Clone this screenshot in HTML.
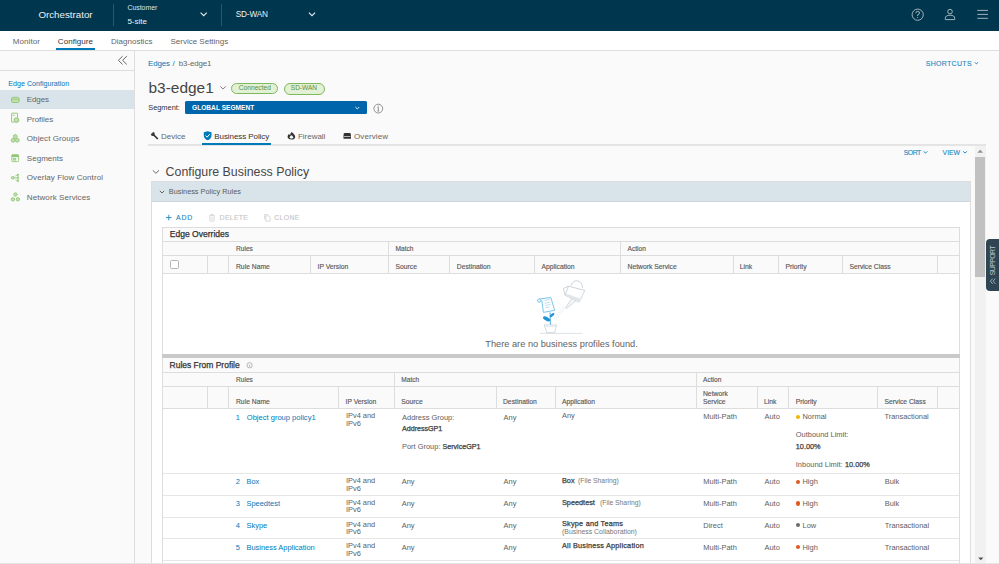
<!DOCTYPE html>
<html><head><meta charset="utf-8"><style>
html,body{margin:0;padding:0;}
body{width:999px;height:564px;overflow:hidden;position:relative;background:#fafafa;font-family:"Liberation Sans",sans-serif;}
.t{position:absolute;white-space:pre;}
.a{position:absolute;}
svg{position:absolute;overflow:visible;}
</style></head><body>
<div class='a' style='left:0;top:0;width:999px;height:31px;background:#00364e;'></div>
<div class='a' style='left:113px;top:4px;width:1px;height:22px;background:rgba(255,255,255,0.16);'></div>
<div class='a' style='left:221px;top:4px;width:1px;height:22px;background:rgba(255,255,255,0.16);'></div>
<svg style='left:0;top:0' width='999' height='31'><polyline points='200.6,12.6 203.7,15.7 206.8,12.6' fill='none' stroke='#e6ecef' stroke-width='1.1'/><polyline points='308.9,12.6 312,15.7 315.1,12.6' fill='none' stroke='#e6ecef' stroke-width='1.1'/><circle cx='917.7' cy='14.7' r='5.6' fill='none' stroke='#b4c2ca' stroke-width='0.9'/><path d='M915.9,13.2 Q915.9,11.3 917.7,11.3 Q919.5,11.3 919.5,13 Q919.5,14.2 917.7,14.8 L917.7,16' fill='none' stroke='#b4c2ca' stroke-width='0.9'/><circle cx='917.7' cy='17.6' r='0.5' fill='#b4c2ca'/><circle cx='950' cy='11.6' r='2.3' fill='none' stroke='#b4c2ca' stroke-width='0.9'/><path d='M945.3,19.6 L945.3,18.4 Q945.3,15.2 950,15.2 Q954.7,15.2 954.7,18.4 L954.7,19.6 Z' fill='none' stroke='#b4c2ca' stroke-width='0.9'/><path d='M977.3,10.4 H987.9 M977.3,14.4 H987.9 M977.3,18.3 H987.9' stroke='#b4c2ca' stroke-width='0.9'/></svg>
<div class='a' style='left:0;top:31px;width:999px;height:19px;background:#ffffff;border-bottom:1px solid #dddddd;'></div>
<div class='a' style='left:56px;top:48px;width:39px;height:2px;background:#0079b8;'></div>
<div class='a' style='left:134px;top:51px;width:1px;height:513px;background:#dddddd;'></div>
<div class='a' style='left:0;top:70px;width:134px;height:1px;background:#dddddd;'></div>
<svg style='left:0;top:0' width='140' height='80'><polyline points='122.6,56.2 118.4,60.3 122.6,64.4' fill='none' stroke='#666' stroke-width='1'/><polyline points='126.8,56.2 122.6,60.3 126.8,64.4' fill='none' stroke='#666' stroke-width='1'/></svg>
<div class='a' style='left:0;top:90px;width:134px;height:19px;background:#d9e4ea;'></div>
<svg style='left:0;top:0' width='30' height='210'><rect x='11.5' y='97.3' width='7.6' height='5.2' rx='1.6' fill='#c2e0ae' stroke='#93c777' stroke-width='1'/><path d='M12,99.3 H18.6' stroke='#93c777' stroke-width='0.8'/><path d='M17.6,117.5 V113.6 Q17.6,113.2 17.2,113.2 H12 Q11.6,113.2 11.6,113.6 V121.8 Q11.6,122.2 12,122.2 H14' fill='none' stroke='#93c777' stroke-width='1'/><path d='M12.5,115.3 H15' stroke='#93c777' stroke-width='0.8'/><circle cx='16.4' cy='120.1' r='2.4' fill='#c2e0ae' stroke='#93c777' stroke-width='1'/><circle cx='15.2' cy='136.5' r='1.9' fill='#c2e0ae' stroke='#93c777' stroke-width='0.9'/><circle cx='13.1' cy='140.3' r='1.9' fill='#c2e0ae' stroke='#93c777' stroke-width='0.9'/><circle cx='17.3' cy='140.3' r='1.9' fill='#c2e0ae' stroke='#93c777' stroke-width='0.9'/><rect x='11.8' y='154.7' width='6.8' height='6.9' rx='0.8' fill='none' stroke='#93c777' stroke-width='0.9'/><rect x='11.8' y='154.7' width='6.8' height='2.4' fill='#93c777'/><rect x='13.2' y='158.3' width='2.6' height='1.8' fill='#c2e0ae' stroke='#93c777' stroke-width='0.7'/><ellipse cx='12.9' cy='177.8' rx='1.5' ry='1.3' fill='#c2e0ae' stroke='#93c777' stroke-width='0.9'/><path d='M14.4,177.8 H18 M18,174.6 V181 M15.5,175.8 L18,174.6 M15.5,179.8 L18,181' fill='none' stroke='#93c777' stroke-width='0.9'/><circle cx='18' cy='174.6' r='0.9' fill='#93c777'/><circle cx='18' cy='177.8' r='0.9' fill='#93c777'/><circle cx='18' cy='181' r='0.9' fill='#93c777'/><circle cx='15.4' cy='194.5' r='1.7' fill='#c2e0ae' stroke='#93c777' stroke-width='0.9'/><circle cx='12.9' cy='199.3' r='1.7' fill='#c2e0ae' stroke='#93c777' stroke-width='0.9'/><circle cx='17.9' cy='199.3' r='1.7' fill='#c2e0ae' stroke='#93c777' stroke-width='0.9'/></svg>
<svg style='left:0;top:0' width='999' height='120'><polyline points='974.8,62.3 976.4,63.9 978,62.3' fill='none' stroke='#0079b8' stroke-width='0.9'/><polyline points='220.3,86.3 223,89.1 225.8,86.3' fill='none' stroke='#777' stroke-width='0.9'/></svg>
<div class='a' style='left:231px;top:82.8px;width:45.2px;height:9.7px;border:1px solid #80b85e;border-radius:6px;background:#e2f1d5;'></div>
<div class='a' style='left:283.7px;top:83px;width:39px;height:9.5px;border:1px solid #80b85e;border-radius:6px;background:#e2f1d5;'></div>
<div class='a' style='left:185px;top:101.4px;width:182px;height:12.7px;background:#0065aa;border-radius:1.5px;'></div>
<svg style='left:0;top:0' width='999' height='150'><polyline points='355.4,107 357.3,108.9 359.2,107' fill='none' stroke='#ffffff' stroke-width='0.9'/><circle cx='378.3' cy='108.6' r='4.4' fill='none' stroke='#777' stroke-width='0.8'/><path d='M378.3,107.3 V111 M377.4,111 H379.2 M377.5,107.3 H378.3' stroke='#777' stroke-width='0.8' fill='none'/><circle cx='378.3' cy='106' r='0.5' fill='#777'/><path d='M153.6,134.9 L157.5,138.6' stroke='#333' stroke-width='1.45' stroke-linecap='round'/><circle cx='152.8' cy='134' r='1.95' fill='#333'/><circle cx='151.6' cy='132.6' r='1.05' fill='#fafafa'/><path d='M151,133.2 L150.4,132 L152.2,132' fill='#fafafa'/><path d='M203.8,132.3 L207.65,131.2 L211.5,132.3 L211.5,135.3 Q211.5,138.8 207.65,140.3 Q203.8,138.8 203.8,135.3 Z' fill='#0079b8'/><polyline points='205.6,135.6 207.2,137.1 209.8,134.2' fill='none' stroke='#fff' stroke-width='1'/><path d='M291.6,132 C293.2,133.4 295.2,135 295.2,137 C295.2,138.7 293.6,139.6 291.4,139.6 C289.2,139.6 287.6,138.6 287.6,136.8 C287.6,135.4 288.3,134.5 289.1,133.7 C289.3,134.6 289.7,135.1 290.2,135.4 C290.2,134.2 290.7,133 291.6,132 Z' fill='#333'/><path d='M291.5,135.2 C292.6,136 293.3,136.8 293.3,137.6 C293.3,138.3 292.5,138.6 291.4,138.6 C290.3,138.6 289.6,138.2 289.6,137.5 C289.6,136.6 290.5,135.9 291.5,135.2 Z' fill='#fafafa'/><path d='M344.6,133 H349.9 Q350.4,133 350.6,133.5 L351,135.4 V138.2 Q351,138.8 350.4,138.8 H344.1 Q343.5,138.8 343.5,138.2 V135.4 L343.9,133.5 Q344.1,133 344.6,133 Z' fill='#333'/><rect x='344' y='136' width='6.5' height='0.65' fill='#fafafa'/></svg>
<div class='a' style='left:148px;top:144px;width:838px;height:2px;background:#e4e4e4;'></div>
<div class='a' style='left:202px;top:143px;width:69px;height:2px;background:#0079b8;'></div>
<svg style='left:0;top:0' width='999' height='170'><polyline points='923.7,151.3 925.5,153.1 927.3,151.3' fill='none' stroke='#0079b8' stroke-width='0.9'/><polyline points='963.2,151.3 965,153.1 966.8,151.3' fill='none' stroke='#0079b8' stroke-width='0.9'/></svg>
<div class='a' style='left:975px;top:146px;width:11px;height:418px;background:#f1f1f1;'></div>
<div class='a' style='left:975px;top:157px;width:10px;height:119.6px;background:#c1c1c1;'></div>
<svg style='left:0;top:0' width='999' height='564'><polygon points='977.4,152.8 980.2,149.8 983,152.8' fill='#8f8f8f'/><polygon points='978.2,557.5 980.8,560.3 983.4,557.5' fill='#505050'/></svg>
<div class='a' style='left:986px;top:239.3px;width:20px;height:51.6px;background:#2f4553;border-radius:4px;'></div>
<svg style='left:0;top:0' width='999' height='300'><text x='0' y='0' transform='translate(994.7,275.2) rotate(-90)' font-family='Liberation Sans' font-size='6.9' fill='#b9c6ce' textLength='29.8' lengthAdjust='spacing'>SUPPORT</text><polyline points='992.6,278.6 990.4,281.2 992.6,283.8' fill='none' stroke='#b9c6ce' stroke-width='0.8'/><polyline points='995.3,278.6 993.1,281.2 995.3,283.8' fill='none' stroke='#b9c6ce' stroke-width='0.8'/></svg>
<div class='a' style='left:151px;top:181px;width:818px;height:400px;background:#fff;border:1px solid #dddddd;'></div>
<div class='a' style='left:152px;top:182px;width:818px;height:19px;background:#d9e4ea;border-bottom:1px solid #cfd7dc;'></div>
<svg style='left:0;top:0' width='400' height='230'><polyline points='152.8,170.3 155.9,173.3 159,170.3' fill='none' stroke='#555' stroke-width='0.9'/><polyline points='159.8,190.8 162,193 164.2,190.8' fill='none' stroke='#555' stroke-width='0.9'/></svg>
<svg style='left:0;top:0' width='400' height='230'><path d='M166,217.6 H171.6 M168.8,214.8 V220.4' stroke='#1f86bd' stroke-width='0.9'/><path d='M209.2,215.3 H214.8 M211,215.3 V214.5 H213 V215.3' fill='none' stroke='#cccccc' stroke-width='0.75'/><path d='M209.9,215.8 V220.6 Q209.9,221.1 210.4,221.1 H213.6 Q214.1,221.1 214.1,220.6 V215.8' fill='none' stroke='#cccccc' stroke-width='0.75'/><path d='M211.3,216.8 V220 M212.7,216.8 V220' stroke='#d4d4d4' stroke-width='0.55'/><path d='M264.6,219.4 V214.5 H267.8' fill='none' stroke='#cccccc' stroke-width='0.75'/><path d='M265.9,215.8 H268.8 L270.1,217.1 V221.1 H265.9 Z' fill='#fff' stroke='#cccccc' stroke-width='0.75'/></svg>
<div class='a' style='left:162px;top:227px;width:797px;height:46px;background:#fafafa;'></div>
<div class='a' style='left:162px;top:227px;width:798px;height:1px;background:#dddddd;'></div>
<div class='a' style='left:162px;top:241px;width:798px;height:1px;background:#dddddd;'></div>
<div class='a' style='left:162px;top:255px;width:798px;height:1px;background:#dddddd;'></div>
<div class='a' style='left:162px;top:273px;width:798px;height:1px;background:#dddddd;'></div>
<div class='a' style='left:162px;top:227px;width:1px;height:127px;background:#dddddd;'></div>
<div class='a' style='left:959px;top:227px;width:1px;height:127px;background:#dddddd;'></div>
<div class='a' style='left:388px;top:241px;width:1px;height:32px;background:#dddddd;'></div>
<div class='a' style='left:620px;top:241px;width:1px;height:32px;background:#dddddd;'></div>
<div class='a' style='left:207px;top:255px;width:1px;height:18px;background:#dddddd;'></div>
<div class='a' style='left:228px;top:255px;width:1px;height:18px;background:#dddddd;'></div>
<div class='a' style='left:310px;top:255px;width:1px;height:18px;background:#dddddd;'></div>
<div class='a' style='left:449px;top:255px;width:1px;height:18px;background:#dddddd;'></div>
<div class='a' style='left:534px;top:255px;width:1px;height:18px;background:#dddddd;'></div>
<div class='a' style='left:733px;top:255px;width:1px;height:18px;background:#dddddd;'></div>
<div class='a' style='left:778px;top:255px;width:1px;height:18px;background:#dddddd;'></div>
<div class='a' style='left:842px;top:255px;width:1px;height:18px;background:#dddddd;'></div>
<div class='a' style='left:937px;top:255px;width:1px;height:18px;background:#dddddd;'></div>
<div class='a' style='left:169.6px;top:259.5px;width:7.2px;height:7.2px;border:0.8px solid #b5b5b5;border-radius:1.5px;background:#fff;'></div>
<svg style='left:0;top:0' width='999' height='564'><path d='M540.2,333.4 H582' stroke='#dbe3e8' stroke-width='1'/><path d='M544.1,324.9 H556.6 L554.7,332.6 H546.9 Z' fill='#fff' stroke='#b8c3cb' stroke-width='0.6'/><path d='M544.5,326.3 H556.2' stroke='#c8d1d7' stroke-width='0.5'/><path d='M550.1,312.4 L550.4,324.6' stroke='#2b9bd8' stroke-width='0.8'/><ellipse cx='546.6' cy='318.9' rx='3.9' ry='1.9' transform='rotate(28 546.6 318.9)' fill='#1f95d6'/><ellipse cx='552.1' cy='315.1' rx='2.9' ry='1.3' transform='rotate(-40 552.1 315.1)' fill='#1f95d6'/><path d='M539.5,299 L550.8,297.5 L554.7,310.3 L543.4,312.4 L541.8,300.6' fill='#fff' stroke='#4fb1e4' stroke-width='0.75'/><circle cx='539.2' cy='300.6' r='1.7' fill='#eaf5fb' stroke='#4fb1e4' stroke-width='0.7'/><path d='M544.5,300.6 L550,299.4 M544.5,303.3 L550.4,302.1 M544.9,305.6 L550.8,304.4 M545.3,307.9 L549.6,306.8' stroke='#86c8ec' stroke-width='0.55'/><path d='M554.3,318.9 L563.8,306.2' stroke='#c9d1d6' stroke-width='0.6' stroke-dasharray='1.3,1.1'/><path d='M556.3,319.3 L565.6,307' stroke='#c9d1d6' stroke-width='0.6' stroke-dasharray='1.3,1.1'/><path d='M572.1,298 L565.7,307.6 L566.6,308.6 L576.2,300.6 Z' fill='#f3f5f7' stroke='#b8c3cb' stroke-width='0.6'/><path d='M571.1,285.6 Q572.5,280.3 577.4,280.8 Q582.4,281.6 582.6,287.8' fill='none' stroke='#b8c3cb' stroke-width='0.7'/><path d='M568.5,286.2 L584.8,290.4 L579.1,302.2 L565,295.2 Z' fill='#fff' stroke='#b8c3cb' stroke-width='0.7'/><path d='M565.9,293.4 L581.6,298.9 L579.1,302.2 L565,295.2 Z' fill='#e1e6ea'/><path d='M568.5,286.2 L563.4,288.5 L565,295.2' fill='none' stroke='#b8c3cb' stroke-width='0.7'/></svg>
<div class='a' style='left:162px;top:354px;width:798px;height:4px;background:#c9c9c9;'></div>
<div class='a' style='left:162px;top:358px;width:797px;height:50px;background:#fafafa;'></div>
<div class='a' style='left:162px;top:372px;width:798px;height:1px;background:#dddddd;'></div>
<div class='a' style='left:162px;top:386px;width:798px;height:1px;background:#dddddd;'></div>
<div class='a' style='left:162px;top:408px;width:798px;height:1px;background:#dddddd;'></div>
<div class='a' style='left:163px;top:473px;width:796px;height:1px;background:#e6e6e6;'></div>
<div class='a' style='left:163px;top:495px;width:796px;height:1px;background:#e6e6e6;'></div>
<div class='a' style='left:163px;top:517px;width:796px;height:1px;background:#e6e6e6;'></div>
<div class='a' style='left:163px;top:538px;width:796px;height:1px;background:#e6e6e6;'></div>
<div class='a' style='left:163px;top:560px;width:796px;height:1px;background:#e6e6e6;'></div>
<div class='a' style='left:162px;top:358px;width:1px;height:206px;background:#dddddd;'></div>
<div class='a' style='left:959px;top:358px;width:1px;height:206px;background:#dddddd;'></div>
<div class='a' style='left:394px;top:372px;width:1px;height:36px;background:#dddddd;'></div>
<div class='a' style='left:696px;top:372px;width:1px;height:36px;background:#dddddd;'></div>
<div class='a' style='left:207px;top:386px;width:1px;height:22px;background:#dddddd;'></div>
<div class='a' style='left:228px;top:386px;width:1px;height:22px;background:#dddddd;'></div>
<div class='a' style='left:338px;top:386px;width:1px;height:22px;background:#dddddd;'></div>
<div class='a' style='left:496px;top:386px;width:1px;height:22px;background:#dddddd;'></div>
<div class='a' style='left:555px;top:386px;width:1px;height:22px;background:#dddddd;'></div>
<div class='a' style='left:757px;top:386px;width:1px;height:22px;background:#dddddd;'></div>
<div class='a' style='left:788px;top:386px;width:1px;height:22px;background:#dddddd;'></div>
<div class='a' style='left:877px;top:386px;width:1px;height:22px;background:#dddddd;'></div>
<div class='a' style='left:937px;top:386px;width:1px;height:22px;background:#dddddd;'></div>
<svg style='left:0;top:0' width='300' height='380'><circle cx='249.6' cy='365.3' r='2.6' fill='none' stroke='#888' stroke-width='0.6'/><path d='M249.6,364.6 V366.8' stroke='#888' stroke-width='0.6'/></svg>
<div class='a' style='left:795.9px;top:414.7px;width:4.4px;height:4.4px;border-radius:50%;background:#f5b400;'></div>
<div class='a' style='left:795.9px;top:479.60px;width:4.4px;height:4.4px;border-radius:50%;background:#e2571e;'></div>
<div class='a' style='left:795.9px;top:501.30px;width:4.4px;height:4.4px;border-radius:50%;background:#e2571e;'></div>
<div class='a' style='left:795.9px;top:523.00px;width:4.4px;height:4.4px;border-radius:50%;background:#6b6b6b;'></div>
<div class='a' style='left:795.9px;top:544.70px;width:4.4px;height:4.4px;border-radius:50%;background:#e2571e;'></div>
<div class='a' style='left:0px;top:563px;width:999px;height:1px;background:#e4e4e4;'></div>
<div class='t' style='left:38.40px;top:10.00px;font-size:9.752px;line-height:9.752px;color:#eef2f4;font-weight:400;letter-spacing:0em;font-family:"Liberation Sans",sans-serif;'>Orchestrator</div>
<div class='t' style='left:127.40px;top:5.00px;font-size:6.919px;line-height:6.919px;color:#dfe6ea;font-weight:400;letter-spacing:0em;font-family:"Liberation Sans",sans-serif;'>Customer</div>
<div class='t' style='left:127.40px;top:17.60px;font-size:8.015px;line-height:8.015px;color:#eef2f4;font-weight:400;letter-spacing:0em;font-family:"Liberation Sans",sans-serif;'>5-site</div>
<div class='t' style='left:235.75px;top:11.00px;font-size:8.2px;line-height:8.2px;color:#eef2f4;font-weight:400;letter-spacing:-0.131px;font-family:"Liberation Sans",sans-serif;'>SD-WAN</div>
<div class='t' style='left:12.80px;top:38.00px;font-size:8.0px;line-height:8.0px;color:#666666;font-weight:400;letter-spacing:0.085px;font-family:"Liberation Sans",sans-serif;'>Monitor</div>
<div class='t' style='left:57.80px;top:38.00px;font-size:8.0px;line-height:8.0px;color:#333333;font-weight:400;letter-spacing:0.064px;font-family:"Liberation Sans",sans-serif;'>Configure</div>
<div class='t' style='left:111.00px;top:38.00px;font-size:8.0px;line-height:8.0px;color:#666666;font-weight:400;letter-spacing:0.004px;font-family:"Liberation Sans",sans-serif;'>Diagnostics</div>
<div class='t' style='left:170.50px;top:38.00px;font-size:8.0px;line-height:8.0px;color:#666666;font-weight:400;letter-spacing:-0.004px;font-family:"Liberation Sans",sans-serif;'>Service Settings</div>
<div class='t' style='left:8.30px;top:81.00px;font-size:7.124px;line-height:7.124px;color:#0079b8;font-weight:400;letter-spacing:0em;font-family:"Liberation Sans",sans-serif;'>Edge Configuration</div>
<div class='t' style='left:26.80px;top:96.20px;font-size:8.05px;line-height:8.05px;color:#666666;font-weight:400;letter-spacing:-0.157px;font-family:"Liberation Sans",sans-serif;'>Edges</div>
<div class='t' style='left:26.80px;top:115.70px;font-size:8.05px;line-height:8.05px;color:#666666;font-weight:400;letter-spacing:-0.065px;font-family:"Liberation Sans",sans-serif;'>Profiles</div>
<div class='t' style='left:26.80px;top:135.20px;font-size:8.05px;line-height:8.05px;color:#666666;font-weight:400;letter-spacing:0.066px;font-family:"Liberation Sans",sans-serif;'>Object Groups</div>
<div class='t' style='left:26.80px;top:154.70px;font-size:8.05px;line-height:8.05px;color:#666666;font-weight:400;letter-spacing:0.007px;font-family:"Liberation Sans",sans-serif;'>Segments</div>
<div class='t' style='left:26.80px;top:174.20px;font-size:8.05px;line-height:8.05px;color:#666666;font-weight:400;letter-spacing:0.055px;font-family:"Liberation Sans",sans-serif;'>Overlay Flow Control</div>
<div class='t' style='left:26.80px;top:193.70px;font-size:8.05px;line-height:8.05px;color:#666666;font-weight:400;letter-spacing:0.057px;font-family:"Liberation Sans",sans-serif;'>Network Services</div>
<div class='t' style='left:148.00px;top:59.50px;font-size:7.9px;line-height:7.9px;color:#0079b8;font-weight:400;letter-spacing:-0.101px;font-family:"Liberation Sans",sans-serif;'>Edges</div>
<div class='t' style='left:172.60px;top:59.50px;font-size:8px;line-height:8px;color:#0079b8;font-weight:400;letter-spacing:0em;font-family:"Liberation Sans",sans-serif;'>/</div>
<div class='t' style='left:178.80px;top:59.50px;font-size:7.9px;line-height:7.9px;color:#666666;font-weight:400;letter-spacing:-0.099px;font-family:"Liberation Sans",sans-serif;'>b3-edge1</div>
<div class='t' style='left:925.70px;top:60.00px;font-size:7.0px;line-height:7.0px;color:#1a86bf;font-weight:400;letter-spacing:0.308px;font-family:"Liberation Sans",sans-serif;-webkit-text-stroke:0.1px currentColor;'>SHORTCUTS</div>
<div class='t' style='left:148.50px;top:80.30px;font-size:15.45px;line-height:15.45px;color:#454545;font-weight:400;letter-spacing:0em;font-family:"Liberation Sans",sans-serif;'>b3-edge1</div>
<div class='t' style='left:238.80px;top:85.20px;font-size:6.656px;line-height:6.656px;color:#5d8f3d;font-weight:400;letter-spacing:0em;font-family:"Liberation Sans",sans-serif;'>Connected</div>
<div class='t' style='left:290.80px;top:85.30px;font-size:6.544px;line-height:6.544px;color:#5d8f3d;font-weight:400;letter-spacing:0em;font-family:"Liberation Sans",sans-serif;'>SD-WAN</div>
<div class='t' style='left:148.20px;top:104.20px;font-size:7.428px;line-height:7.428px;color:#333333;font-weight:400;letter-spacing:0em;font-family:"Liberation Sans",sans-serif;'>Segment:</div>
<div class='t' style='left:192.00px;top:104.90px;font-size:6.6px;line-height:6.6px;color:#ffffff;font-weight:700;letter-spacing:0.014px;font-family:"Liberation Sans",sans-serif;'>GLOBAL SEGMENT</div>
<div class='t' style='left:161.00px;top:133.00px;font-size:8.0px;line-height:8.0px;color:#666666;font-weight:400;letter-spacing:0.008px;font-family:"Liberation Sans",sans-serif;'>Device</div>
<div class='t' style='left:214.30px;top:133.00px;font-size:8.0px;line-height:8.0px;color:#333333;font-weight:400;letter-spacing:-0.08px;font-family:"Liberation Sans",sans-serif;'>Business Policy</div>
<div class='t' style='left:298.00px;top:133.00px;font-size:8.0px;line-height:8.0px;color:#666666;font-weight:400;letter-spacing:-0.023px;font-family:"Liberation Sans",sans-serif;'>Firewall</div>
<div class='t' style='left:354.00px;top:133.00px;font-size:8.0px;line-height:8.0px;color:#666666;font-weight:400;letter-spacing:0.093px;font-family:"Liberation Sans",sans-serif;'>Overview</div>
<div class='t' style='left:903.70px;top:149.70px;font-size:6.9px;line-height:6.9px;color:#1a86bf;font-weight:400;letter-spacing:-0.483px;font-family:"Liberation Sans",sans-serif;-webkit-text-stroke:0.1px currentColor;'>SORT</div>
<div class='t' style='left:942.60px;top:149.70px;font-size:6.9px;line-height:6.9px;color:#1a86bf;font-weight:400;letter-spacing:-0.046px;font-family:"Liberation Sans",sans-serif;-webkit-text-stroke:0.1px currentColor;'>VIEW</div>
<div class='t' style='left:165.60px;top:166.30px;font-size:12.378px;line-height:12.378px;color:#474747;font-weight:400;letter-spacing:0em;font-family:"Liberation Sans",sans-serif;'>Configure Business Policy</div>
<div class='t' style='left:168.80px;top:188.30px;font-size:7.339px;line-height:7.339px;color:#5a5a5a;font-weight:400;letter-spacing:0em;font-family:"Liberation Sans",sans-serif;'>Business Policy Rules</div>
<div class='t' style='left:176.00px;top:215.20px;font-size:6.9px;line-height:6.9px;color:#1f86bd;font-weight:400;letter-spacing:0.862px;font-family:"Liberation Sans",sans-serif;-webkit-text-stroke:0.12px currentColor;'>ADD</div>
<div class='t' style='left:219.60px;top:215.20px;font-size:6.9px;line-height:6.9px;color:#c6c6c6;font-weight:400;letter-spacing:0.311px;font-family:"Liberation Sans",sans-serif;-webkit-text-stroke:0.12px currentColor;'>DELETE</div>
<div class='t' style='left:274.20px;top:215.20px;font-size:6.9px;line-height:6.9px;color:#c6c6c6;font-weight:400;letter-spacing:0.382px;font-family:"Liberation Sans",sans-serif;-webkit-text-stroke:0.12px currentColor;'>CLONE</div>
<div class='t' style='left:169.70px;top:230.00px;font-size:8.563px;line-height:8.563px;color:#333333;font-weight:400;letter-spacing:0em;font-family:"Liberation Sans",sans-serif;-webkit-text-stroke:0.25px currentColor;'>Edge Overrides</div>
<div class='t' style='left:236.00px;top:245.50px;font-size:6.6px;line-height:6.6px;color:#5a5a5a;font-weight:400;letter-spacing:0em;font-family:"Liberation Sans",sans-serif;-webkit-text-stroke:0.15px currentColor;'>Rules</div>
<div class='t' style='left:395.50px;top:245.50px;font-size:6.6px;line-height:6.6px;color:#5a5a5a;font-weight:400;letter-spacing:0em;font-family:"Liberation Sans",sans-serif;-webkit-text-stroke:0.15px currentColor;'>Match</div>
<div class='t' style='left:627.60px;top:245.50px;font-size:6.6px;line-height:6.6px;color:#5a5a5a;font-weight:400;letter-spacing:0em;font-family:"Liberation Sans",sans-serif;-webkit-text-stroke:0.15px currentColor;'>Action</div>
<div class='t' style='left:236.00px;top:263.50px;font-size:6.75px;line-height:6.75px;color:#5a5a5a;font-weight:400;letter-spacing:0em;font-family:"Liberation Sans",sans-serif;-webkit-text-stroke:0.15px currentColor;'>Rule Name</div>
<div class='t' style='left:317.50px;top:263.50px;font-size:6.75px;line-height:6.75px;color:#5a5a5a;font-weight:400;letter-spacing:0em;font-family:"Liberation Sans",sans-serif;-webkit-text-stroke:0.15px currentColor;'>IP Version</div>
<div class='t' style='left:395.50px;top:263.50px;font-size:6.75px;line-height:6.75px;color:#5a5a5a;font-weight:400;letter-spacing:0em;font-family:"Liberation Sans",sans-serif;-webkit-text-stroke:0.15px currentColor;'>Source</div>
<div class='t' style='left:456.80px;top:263.50px;font-size:6.75px;line-height:6.75px;color:#5a5a5a;font-weight:400;letter-spacing:0em;font-family:"Liberation Sans",sans-serif;-webkit-text-stroke:0.15px currentColor;'>Destination</div>
<div class='t' style='left:541.60px;top:263.50px;font-size:6.75px;line-height:6.75px;color:#5a5a5a;font-weight:400;letter-spacing:0em;font-family:"Liberation Sans",sans-serif;-webkit-text-stroke:0.15px currentColor;'>Application</div>
<div class='t' style='left:627.60px;top:263.50px;font-size:6.75px;line-height:6.75px;color:#5a5a5a;font-weight:400;letter-spacing:0em;font-family:"Liberation Sans",sans-serif;-webkit-text-stroke:0.15px currentColor;'>Network Service</div>
<div class='t' style='left:739.80px;top:263.50px;font-size:6.75px;line-height:6.75px;color:#5a5a5a;font-weight:400;letter-spacing:0em;font-family:"Liberation Sans",sans-serif;-webkit-text-stroke:0.15px currentColor;'>Link</div>
<div class='t' style='left:785.60px;top:263.50px;font-size:6.75px;line-height:6.75px;color:#5a5a5a;font-weight:400;letter-spacing:0em;font-family:"Liberation Sans",sans-serif;-webkit-text-stroke:0.15px currentColor;'>Priority</div>
<div class='t' style='left:849.40px;top:263.50px;font-size:6.75px;line-height:6.75px;color:#5a5a5a;font-weight:400;letter-spacing:0em;font-family:"Liberation Sans",sans-serif;-webkit-text-stroke:0.15px currentColor;'>Service Class</div>
<div class='t' style='left:485.30px;top:340.00px;font-size:9.248px;line-height:9.248px;color:#626262;font-weight:400;letter-spacing:0em;font-family:"Liberation Sans",sans-serif;'>There are no business profiles found.</div>
<div class='t' style='left:169.60px;top:360.80px;font-size:8.477px;line-height:8.477px;color:#333333;font-weight:400;letter-spacing:0em;font-family:"Liberation Sans",sans-serif;-webkit-text-stroke:0.25px currentColor;'>Rules From Profile</div>
<div class='t' style='left:236.00px;top:377.00px;font-size:6.6px;line-height:6.6px;color:#5a5a5a;font-weight:400;letter-spacing:0em;font-family:"Liberation Sans",sans-serif;-webkit-text-stroke:0.15px currentColor;'>Rules</div>
<div class='t' style='left:401.30px;top:377.00px;font-size:6.6px;line-height:6.6px;color:#5a5a5a;font-weight:400;letter-spacing:0em;font-family:"Liberation Sans",sans-serif;-webkit-text-stroke:0.15px currentColor;'>Match</div>
<div class='t' style='left:703.00px;top:377.00px;font-size:6.6px;line-height:6.6px;color:#5a5a5a;font-weight:400;letter-spacing:0em;font-family:"Liberation Sans",sans-serif;-webkit-text-stroke:0.15px currentColor;'>Action</div>
<div class='t' style='left:236.00px;top:398.70px;font-size:6.75px;line-height:6.75px;color:#5a5a5a;font-weight:400;letter-spacing:0em;font-family:"Liberation Sans",sans-serif;-webkit-text-stroke:0.15px currentColor;'>Rule Name</div>
<div class='t' style='left:345.50px;top:398.70px;font-size:6.75px;line-height:6.75px;color:#5a5a5a;font-weight:400;letter-spacing:0em;font-family:"Liberation Sans",sans-serif;-webkit-text-stroke:0.15px currentColor;'>IP Version</div>
<div class='t' style='left:401.30px;top:398.70px;font-size:6.75px;line-height:6.75px;color:#5a5a5a;font-weight:400;letter-spacing:0em;font-family:"Liberation Sans",sans-serif;-webkit-text-stroke:0.15px currentColor;'>Source</div>
<div class='t' style='left:503.00px;top:398.70px;font-size:6.75px;line-height:6.75px;color:#5a5a5a;font-weight:400;letter-spacing:0em;font-family:"Liberation Sans",sans-serif;-webkit-text-stroke:0.15px currentColor;'>Destination</div>
<div class='t' style='left:562.00px;top:398.70px;font-size:6.75px;line-height:6.75px;color:#5a5a5a;font-weight:400;letter-spacing:0em;font-family:"Liberation Sans",sans-serif;-webkit-text-stroke:0.15px currentColor;'>Application</div>
<div class='t' style='left:764.00px;top:398.70px;font-size:6.75px;line-height:6.75px;color:#5a5a5a;font-weight:400;letter-spacing:0em;font-family:"Liberation Sans",sans-serif;-webkit-text-stroke:0.15px currentColor;'>Link</div>
<div class='t' style='left:795.70px;top:398.70px;font-size:6.75px;line-height:6.75px;color:#5a5a5a;font-weight:400;letter-spacing:0em;font-family:"Liberation Sans",sans-serif;-webkit-text-stroke:0.15px currentColor;'>Priority</div>
<div class='t' style='left:884.50px;top:398.70px;font-size:6.75px;line-height:6.75px;color:#5a5a5a;font-weight:400;letter-spacing:0em;font-family:"Liberation Sans",sans-serif;-webkit-text-stroke:0.15px currentColor;'>Service Class</div>
<div class='t' style='left:703.00px;top:391.25px;font-size:6.75px;line-height:6.75px;color:#5a5a5a;font-weight:400;letter-spacing:0em;font-family:"Liberation Sans",sans-serif;-webkit-text-stroke:0.15px currentColor;'>Network</div>
<div class='t' style='left:703.00px;top:398.70px;font-size:6.75px;line-height:6.75px;color:#5a5a5a;font-weight:400;letter-spacing:0em;font-family:"Liberation Sans",sans-serif;-webkit-text-stroke:0.15px currentColor;'>Service</div>
<div class='t' style='left:235.80px;top:413.70px;font-size:7.45px;line-height:7.45px;color:#0079b8;font-weight:400;letter-spacing:0em;font-family:"Liberation Sans",sans-serif;'>1</div>
<div class='t' style='left:246.80px;top:413.70px;font-size:7.568px;line-height:7.568px;color:#0079b8;font-weight:400;letter-spacing:0em;font-family:"Liberation Sans",sans-serif;'>Object group policy1</div>
<div class='t' style='left:345.90px;top:412.20px;font-size:7.45px;line-height:7.45px;color:#5e5e5e;font-weight:400;letter-spacing:0em;font-family:"Liberation Sans",sans-serif;'>IPv4 and</div>
<div class='t' style='left:345.90px;top:419.70px;font-size:7.45px;line-height:7.45px;color:#5e5e5e;font-weight:400;letter-spacing:0em;font-family:"Liberation Sans",sans-serif;'>IPv6</div>
<div class='t' style='left:402.00px;top:413.60px;font-size:7.481px;line-height:7.481px;color:#5e5e5e;font-weight:400;letter-spacing:0em;font-family:"Liberation Sans",sans-serif;'>Address Group:</div>
<div class='t' style='left:402.00px;top:425.00px;font-size:7.2px;line-height:7.2px;color:#3d3d3d;font-weight:400;letter-spacing:-0.047px;font-family:"Liberation Sans",sans-serif;-webkit-text-stroke:0.25px currentColor;'>AddressGP1</div>
<div class='t' style='left:402.00px;top:442.60px;font-size:7.45px;line-height:7.45px;color:#5e5e5e;font-weight:400;letter-spacing:0em;font-family:"Liberation Sans",sans-serif;'>Port Group: </div>
<div class='t' style='left:442.50px;top:442.60px;font-size:7.2px;line-height:7.2px;color:#3d3d3d;font-weight:400;letter-spacing:-0.047px;font-family:"Liberation Sans",sans-serif;-webkit-text-stroke:0.25px currentColor;'>ServiceGP1</div>
<div class='t' style='left:503.60px;top:413.60px;font-size:7.45px;line-height:7.45px;color:#5e5e5e;font-weight:400;letter-spacing:0em;font-family:"Liberation Sans",sans-serif;'>Any</div>
<div class='t' style='left:562.00px;top:412.00px;font-size:7.45px;line-height:7.45px;color:#5e5e5e;font-weight:400;letter-spacing:0em;font-family:"Liberation Sans",sans-serif;'>Any</div>
<div class='t' style='left:703.30px;top:413.30px;font-size:7.486px;line-height:7.486px;color:#5e5e5e;font-weight:400;letter-spacing:0em;font-family:"Liberation Sans",sans-serif;'>Multi-Path</div>
<div class='t' style='left:764.50px;top:413.30px;font-size:7.45px;line-height:7.45px;color:#5e5e5e;font-weight:400;letter-spacing:0em;font-family:"Liberation Sans",sans-serif;'>Auto</div>
<div class='t' style='left:802.50px;top:413.30px;font-size:7.45px;line-height:7.45px;color:#5e5e5e;font-weight:400;letter-spacing:0em;font-family:"Liberation Sans",sans-serif;'>Normal</div>
<div class='t' style='left:884.50px;top:413.30px;font-size:7.424px;line-height:7.424px;color:#5e5e5e;font-weight:400;letter-spacing:0em;font-family:"Liberation Sans",sans-serif;'>Transactional</div>
<div class='t' style='left:795.80px;top:431.00px;font-size:7.45px;line-height:7.45px;color:#5e5e5e;font-weight:400;letter-spacing:0em;font-family:"Liberation Sans",sans-serif;'>Outbound Limit:</div>
<div class='t' style='left:795.80px;top:442.80px;font-size:7.3px;line-height:7.3px;color:#3d3d3d;font-weight:400;letter-spacing:0em;font-family:"Liberation Sans",sans-serif;-webkit-text-stroke:0.25px currentColor;'>10.00%</div>
<div class='t' style='left:795.80px;top:460.80px;font-size:7.45px;line-height:7.45px;color:#5e5e5e;font-weight:400;letter-spacing:0em;font-family:"Liberation Sans",sans-serif;'>Inbound Limit: </div>
<div class='t' style='left:845.00px;top:460.80px;font-size:7.3px;line-height:7.3px;color:#3d3d3d;font-weight:400;letter-spacing:0em;font-family:"Liberation Sans",sans-serif;-webkit-text-stroke:0.25px currentColor;'>10.00%</div>
<div class='t' style='left:235.70px;top:478.40px;font-size:7.45px;line-height:7.45px;color:#0079b8;font-weight:400;letter-spacing:0em;font-family:"Liberation Sans",sans-serif;'>2</div>
<div class='t' style='left:246.50px;top:478.40px;font-size:7.45px;line-height:7.45px;color:#0079b8;font-weight:400;letter-spacing:0em;font-family:"Liberation Sans",sans-serif;'>Box</div>
<div class='t' style='left:345.90px;top:477.20px;font-size:7.45px;line-height:7.45px;color:#5e5e5e;font-weight:400;letter-spacing:0em;font-family:"Liberation Sans",sans-serif;'>IPv4 and</div>
<div class='t' style='left:345.90px;top:484.70px;font-size:7.45px;line-height:7.45px;color:#5e5e5e;font-weight:400;letter-spacing:0em;font-family:"Liberation Sans",sans-serif;'>IPv6</div>
<div class='t' style='left:401.70px;top:478.40px;font-size:7.45px;line-height:7.45px;color:#5e5e5e;font-weight:400;letter-spacing:0em;font-family:"Liberation Sans",sans-serif;'>Any</div>
<div class='t' style='left:503.60px;top:478.40px;font-size:7.45px;line-height:7.45px;color:#5e5e5e;font-weight:400;letter-spacing:0em;font-family:"Liberation Sans",sans-serif;'>Any</div>
<div class='t' style='left:562.00px;top:477.00px;font-size:7.3px;line-height:7.3px;color:#3d3d3d;font-weight:400;letter-spacing:0em;font-family:"Liberation Sans",sans-serif;-webkit-text-stroke:0.25px currentColor;'>Box</div>
<div class='t' style='left:578.00px;top:478.00px;font-size:6.796px;line-height:6.796px;color:#777;font-weight:400;letter-spacing:0em;font-family:"Liberation Sans",sans-serif;'>(File Sharing)</div>
<div class='t' style='left:703.30px;top:478.40px;font-size:7.45px;line-height:7.45px;color:#5e5e5e;font-weight:400;letter-spacing:0em;font-family:"Liberation Sans",sans-serif;'>Multi-Path</div>
<div class='t' style='left:764.50px;top:478.40px;font-size:7.45px;line-height:7.45px;color:#5e5e5e;font-weight:400;letter-spacing:0em;font-family:"Liberation Sans",sans-serif;'>Auto</div>
<div class='t' style='left:802.50px;top:478.40px;font-size:7.45px;line-height:7.45px;color:#5e5e5e;font-weight:400;letter-spacing:0em;font-family:"Liberation Sans",sans-serif;'>High</div>
<div class='t' style='left:884.70px;top:478.40px;font-size:7.45px;line-height:7.45px;color:#5e5e5e;font-weight:400;letter-spacing:0em;font-family:"Liberation Sans",sans-serif;'>Bulk</div>
<div class='t' style='left:235.70px;top:500.10px;font-size:7.45px;line-height:7.45px;color:#0079b8;font-weight:400;letter-spacing:0em;font-family:"Liberation Sans",sans-serif;'>3</div>
<div class='t' style='left:246.50px;top:500.10px;font-size:7.45px;line-height:7.45px;color:#0079b8;font-weight:400;letter-spacing:0em;font-family:"Liberation Sans",sans-serif;'>Speedtest</div>
<div class='t' style='left:345.90px;top:498.90px;font-size:7.45px;line-height:7.45px;color:#5e5e5e;font-weight:400;letter-spacing:0em;font-family:"Liberation Sans",sans-serif;'>IPv4 and</div>
<div class='t' style='left:345.90px;top:506.40px;font-size:7.45px;line-height:7.45px;color:#5e5e5e;font-weight:400;letter-spacing:0em;font-family:"Liberation Sans",sans-serif;'>IPv6</div>
<div class='t' style='left:401.70px;top:500.10px;font-size:7.45px;line-height:7.45px;color:#5e5e5e;font-weight:400;letter-spacing:0em;font-family:"Liberation Sans",sans-serif;'>Any</div>
<div class='t' style='left:503.60px;top:500.10px;font-size:7.45px;line-height:7.45px;color:#5e5e5e;font-weight:400;letter-spacing:0em;font-family:"Liberation Sans",sans-serif;'>Any</div>
<div class='t' style='left:562.00px;top:498.70px;font-size:7.3px;line-height:7.3px;color:#3d3d3d;font-weight:400;letter-spacing:0em;font-family:"Liberation Sans",sans-serif;-webkit-text-stroke:0.25px currentColor;'>Speedtest</div>
<div class='t' style='left:600.00px;top:499.70px;font-size:6.796px;line-height:6.796px;color:#777;font-weight:400;letter-spacing:0em;font-family:"Liberation Sans",sans-serif;'>(File Sharing)</div>
<div class='t' style='left:703.30px;top:500.10px;font-size:7.45px;line-height:7.45px;color:#5e5e5e;font-weight:400;letter-spacing:0em;font-family:"Liberation Sans",sans-serif;'>Multi-Path</div>
<div class='t' style='left:764.50px;top:500.10px;font-size:7.45px;line-height:7.45px;color:#5e5e5e;font-weight:400;letter-spacing:0em;font-family:"Liberation Sans",sans-serif;'>Auto</div>
<div class='t' style='left:802.50px;top:500.10px;font-size:7.45px;line-height:7.45px;color:#5e5e5e;font-weight:400;letter-spacing:0em;font-family:"Liberation Sans",sans-serif;'>High</div>
<div class='t' style='left:884.70px;top:500.10px;font-size:7.45px;line-height:7.45px;color:#5e5e5e;font-weight:400;letter-spacing:0em;font-family:"Liberation Sans",sans-serif;'>Bulk</div>
<div class='t' style='left:235.70px;top:521.80px;font-size:7.45px;line-height:7.45px;color:#0079b8;font-weight:400;letter-spacing:0em;font-family:"Liberation Sans",sans-serif;'>4</div>
<div class='t' style='left:246.50px;top:521.80px;font-size:7.45px;line-height:7.45px;color:#0079b8;font-weight:400;letter-spacing:0em;font-family:"Liberation Sans",sans-serif;'>Skype</div>
<div class='t' style='left:345.90px;top:520.60px;font-size:7.45px;line-height:7.45px;color:#5e5e5e;font-weight:400;letter-spacing:0em;font-family:"Liberation Sans",sans-serif;'>IPv4 and</div>
<div class='t' style='left:345.90px;top:528.10px;font-size:7.45px;line-height:7.45px;color:#5e5e5e;font-weight:400;letter-spacing:0em;font-family:"Liberation Sans",sans-serif;'>IPv6</div>
<div class='t' style='left:401.70px;top:521.80px;font-size:7.45px;line-height:7.45px;color:#5e5e5e;font-weight:400;letter-spacing:0em;font-family:"Liberation Sans",sans-serif;'>Any</div>
<div class='t' style='left:503.60px;top:521.80px;font-size:7.45px;line-height:7.45px;color:#5e5e5e;font-weight:400;letter-spacing:0em;font-family:"Liberation Sans",sans-serif;'>Any</div>
<div class='t' style='left:562.00px;top:520.00px;font-size:7.3px;line-height:7.3px;color:#3d3d3d;font-weight:400;letter-spacing:0.222px;font-family:"Liberation Sans",sans-serif;-webkit-text-stroke:0.25px currentColor;'>Skype and Teams</div>
<div class='t' style='left:562.00px;top:528.80px;font-size:6.884px;line-height:6.884px;color:#777;font-weight:400;letter-spacing:0em;font-family:"Liberation Sans",sans-serif;'>(Business Collaboration)</div>
<div class='t' style='left:703.30px;top:521.80px;font-size:7.45px;line-height:7.45px;color:#5e5e5e;font-weight:400;letter-spacing:0em;font-family:"Liberation Sans",sans-serif;'>Direct</div>
<div class='t' style='left:764.50px;top:521.80px;font-size:7.45px;line-height:7.45px;color:#5e5e5e;font-weight:400;letter-spacing:0em;font-family:"Liberation Sans",sans-serif;'>Auto</div>
<div class='t' style='left:802.50px;top:521.80px;font-size:7.45px;line-height:7.45px;color:#5e5e5e;font-weight:400;letter-spacing:0em;font-family:"Liberation Sans",sans-serif;'>Low</div>
<div class='t' style='left:884.70px;top:521.80px;font-size:7.45px;line-height:7.45px;color:#5e5e5e;font-weight:400;letter-spacing:0em;font-family:"Liberation Sans",sans-serif;'>Transactional</div>
<div class='t' style='left:235.70px;top:543.50px;font-size:7.45px;line-height:7.45px;color:#0079b8;font-weight:400;letter-spacing:0em;font-family:"Liberation Sans",sans-serif;'>5</div>
<div class='t' style='left:246.50px;top:543.50px;font-size:7.45px;line-height:7.45px;color:#0079b8;font-weight:400;letter-spacing:0em;font-family:"Liberation Sans",sans-serif;'>Business Application</div>
<div class='t' style='left:345.90px;top:542.30px;font-size:7.45px;line-height:7.45px;color:#5e5e5e;font-weight:400;letter-spacing:0em;font-family:"Liberation Sans",sans-serif;'>IPv4 and</div>
<div class='t' style='left:345.90px;top:549.80px;font-size:7.45px;line-height:7.45px;color:#5e5e5e;font-weight:400;letter-spacing:0em;font-family:"Liberation Sans",sans-serif;'>IPv6</div>
<div class='t' style='left:401.70px;top:543.50px;font-size:7.45px;line-height:7.45px;color:#5e5e5e;font-weight:400;letter-spacing:0em;font-family:"Liberation Sans",sans-serif;'>Any</div>
<div class='t' style='left:503.60px;top:543.50px;font-size:7.45px;line-height:7.45px;color:#5e5e5e;font-weight:400;letter-spacing:0em;font-family:"Liberation Sans",sans-serif;'>Any</div>
<div class='t' style='left:562.00px;top:541.50px;font-size:7.3px;line-height:7.3px;color:#3d3d3d;font-weight:400;letter-spacing:0.204px;font-family:"Liberation Sans",sans-serif;-webkit-text-stroke:0.25px currentColor;'>All Business Application</div>
<div class='t' style='left:703.30px;top:543.50px;font-size:7.45px;line-height:7.45px;color:#5e5e5e;font-weight:400;letter-spacing:0em;font-family:"Liberation Sans",sans-serif;'>Multi-Path</div>
<div class='t' style='left:764.50px;top:543.50px;font-size:7.45px;line-height:7.45px;color:#5e5e5e;font-weight:400;letter-spacing:0em;font-family:"Liberation Sans",sans-serif;'>Auto</div>
<div class='t' style='left:802.50px;top:543.50px;font-size:7.45px;line-height:7.45px;color:#5e5e5e;font-weight:400;letter-spacing:0em;font-family:"Liberation Sans",sans-serif;'>High</div>
<div class='t' style='left:884.70px;top:543.50px;font-size:7.45px;line-height:7.45px;color:#5e5e5e;font-weight:400;letter-spacing:0em;font-family:"Liberation Sans",sans-serif;'>Transactional</div>
</body></html>
